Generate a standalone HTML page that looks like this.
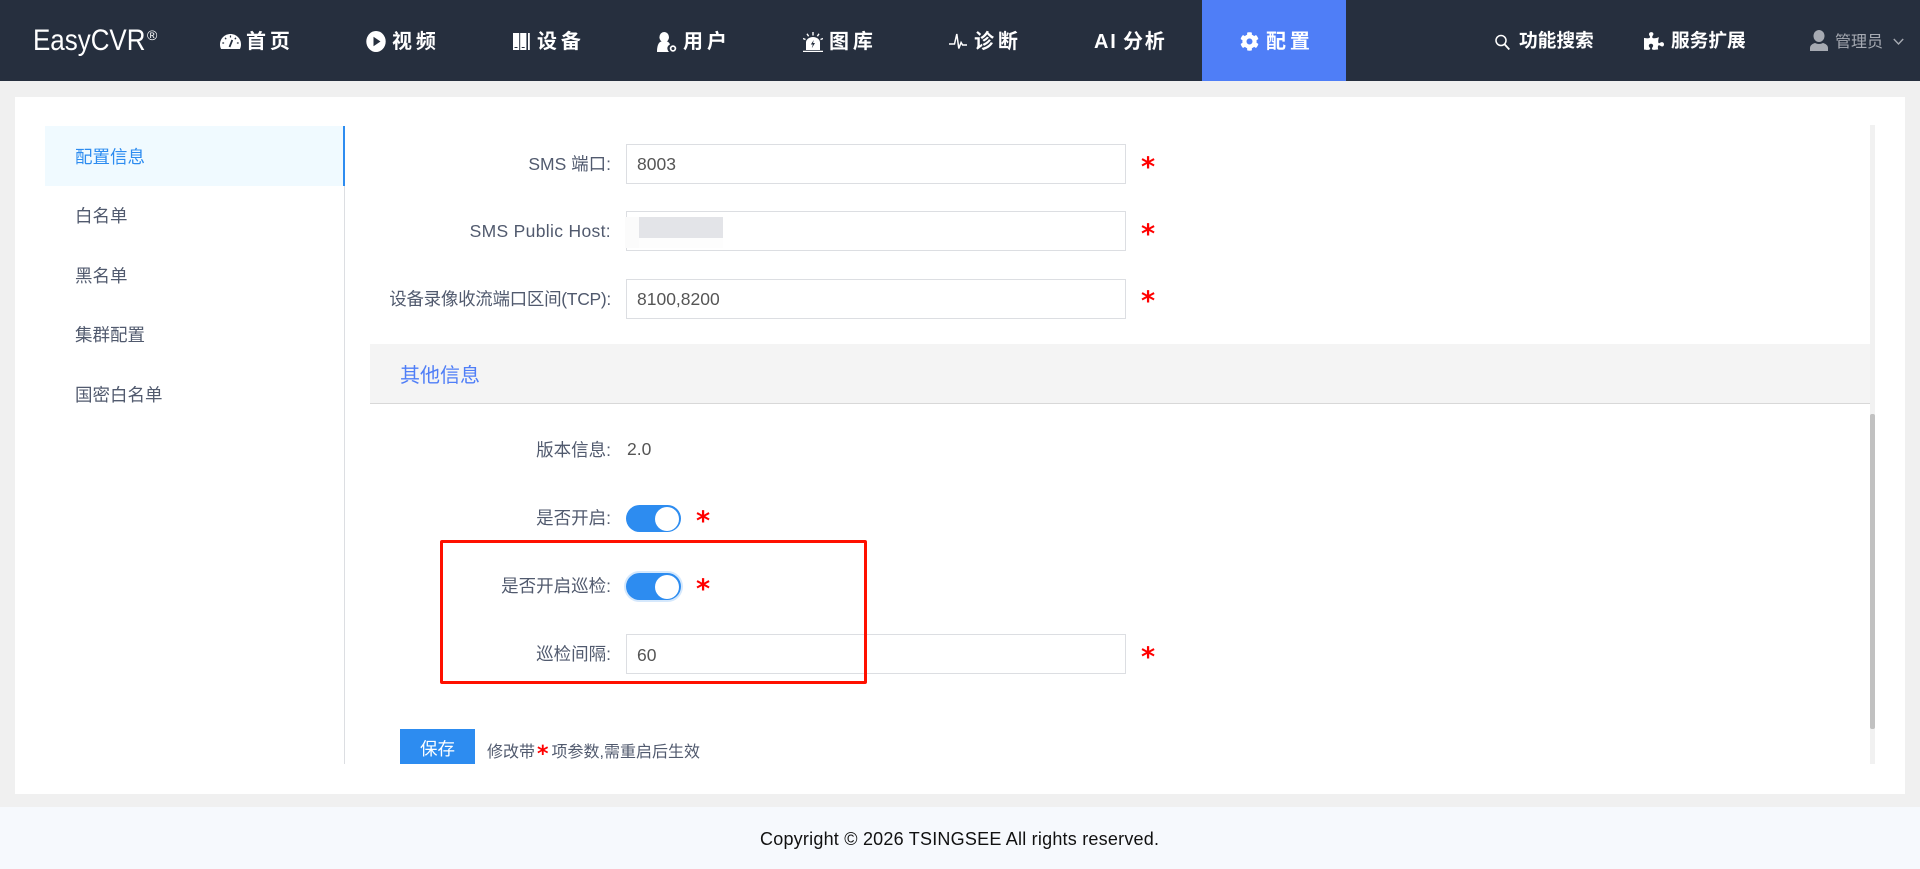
<!DOCTYPE html>
<html lang="zh-CN">
<head>
<meta charset="utf-8">
<title>EasyCVR</title>
<style>
html,body{margin:0;padding:0;width:1920px;height:869px;overflow:hidden;background:#f0f0f0;font-family:"Liberation Sans","Noto Sans CJK SC",sans-serif;color:#515a6e;font-size:17.5px}
.a{position:absolute}
.t{position:absolute;white-space:nowrap;line-height:30px;height:30px}
.nav{font-weight:700;font-size:20px;color:#fff;letter-spacing:3.9px;top:27px}
.nav2{font-weight:700;font-size:18.7px;color:#fff;top:26px}
.side{left:75px}
.lab{right:1309px;text-align:right}
.inp{position:absolute;left:626px;width:498px;height:38px;border:1px solid #dcdee2;background:#fff}
.val{left:637px;color:#555}
.star{position:absolute;left:1141px;color:#f00;font-family:"DejaVu Sans",sans-serif;font-weight:700;font-size:27px;line-height:30px;height:30px}
.tog{position:absolute;left:626px;width:55px;height:27px;border-radius:14px;background:#2d8cf0}
.tog i{position:absolute;right:2px;top:1.500px;width:24px;height:24px;border-radius:50%;background:#fff}
svg{position:absolute;display:block}
</style>
</head>
<body>
<div class="a" style="left:0;top:0;width:1920px;height:81px;background:#262f3e"></div>
<div class="a" style="left:1202px;top:0;width:144px;height:81px;background:#4f7ef7"></div>

<div class="t" style="left:33px;top:23px;font-size:30px;line-height:36px;height:36px;color:#fff;transform:scaleX(.865);transform-origin:left center">EasyCVR</div>
<div class="t" style="left:147px;top:25px;font-size:14px;line-height:20px;height:20px;color:#fff">®</div>

<svg style="left:220px;top:34px" width="21" height="15" viewBox="0 0 21 15"><path fill="#fff" d="M10.500 0C4.700 0 0 4.600 0 10.400c0 1.700.4 3.300 1.100 4.600h18.800c.7-1.300 1.100-2.900 1.100-4.600C21 4.600 16.300 0 10.500 0z"/><path stroke="#262f3e" stroke-width="1.200" fill="none" d="M10.500 1.500v2M5 3.800l1.200 1.400M2.300 9h1.800M16.900 9h1.800M16 3.800l-1.200 1.400"/><path stroke="#262f3e" stroke-width="1.800" fill="none" d="M9.500 13L12.300 6"/></svg>
<div class="t nav" style="left:246px">首页</div>

<svg style="left:366px;top:31px" width="20" height="21" viewBox="0 0 20 21"><ellipse cx="10" cy="10.500" rx="9.700" ry="10.500" fill="#fff"/><path fill="#262f3e" d="M7.500 5.800l7 4.700-7 4.700z"/></svg>
<div class="t nav" style="left:392px">视频</div>

<svg style="left:513px;top:33px" width="17" height="17" viewBox="0 0 17 17"><path fill="#fff" d="M0 0h6.200v17H0zM7.200 0h6.200v17H7.200zM15 0h1.800v17H15z"/><path fill="#262f3e" d="M1.500 14h3v1h-3zM8.700 14h3v1h-3z"/></svg>
<div class="t nav" style="left:537px">设备</div>

<svg style="left:657px;top:32px" width="20" height="20" viewBox="0 0 20 20"><ellipse cx="7.200" cy="5.200" rx="4.800" ry="5.200" fill="#fff"/><path fill="#fff" d="M0 20c0-5 1-10 4.500-10.500h5.500c1.500.4 2.500 1.500 3 3-2 1-3 2.700-2.500 4.700.2 1 .8 2 1.500 2.800z"/><circle cx="16" cy="16.500" r="2.400" fill="none" stroke="#fff" stroke-width="1.700"/></svg>
<div class="t nav" style="left:683px">用户</div>

<svg style="left:803px;top:32px" width="20" height="20" viewBox="0 0 20 20"><path stroke="#fff" stroke-width="1.400" d="M10 0v3.500M4 1.800l1.600 2.500M16 1.800l-1.600 2.500M0 6.500l2.500 1M20 6.500l-2.500 1"/><path fill="#fff" d="M3 18v-7.500C3 7.500 6 5 10 5s7 2.500 7 5.500V18zM0 18.800h20V20H0z"/><path fill="#262f3e" d="M10.800 8L7.800 12.500h2l-1 3.800 3.200-5.300h-2z"/></svg>
<div class="t nav" style="left:829px">图库</div>

<svg style="left:949px;top:33px" width="18" height="17" viewBox="0 0 18 17"><path fill="none" stroke="#fff" stroke-width="1.500" d="M0 11h5.500L7.800 1l2 14.500 2.300-6 1.500 2.500H18"/></svg>
<div class="t nav" style="left:974px">诊断</div>

<div class="t nav" style="left:1094px;letter-spacing:1.800px;word-spacing:-2px">AI 分析</div>

<svg style="left:1240px;top:32px" width="19" height="19" viewBox="0 0 512 512"><path fill="#fff" d="M487.400 315.700l-42.600-24.600c4.300-23.200 4.300-47 0-70.200l42.600-24.600c4.900-2.800 7.100-8.600 5.500-14-11.100-35.600-30-67.800-54.700-94.600-3.800-4.100-10-5.100-14.800-2.300L380.800 110c-17.900-15.400-38.500-27.300-60.800-35.100V25.800c0-5.600-3.900-10.500-9.400-11.700-36.700-8.200-74.300-7.800-109.200 0-5.500 1.200-9.400 6.100-9.400 11.700V75c-22.200 7.900-42.800 19.800-60.800 35.100L88.700 85.500c-4.900-2.800-11-1.900-14.800 2.300-24.700 26.700-43.600 58.900-54.700 94.600-1.700 5.400.6 11.200 5.500 14L67.300 221c-4.300 23.200-4.300 47 0 70.200l-42.600 24.600c-4.900 2.800-7.100 8.600-5.500 14 11.100 35.600 30 67.800 54.700 94.600 3.800 4.100 10 5.100 14.800 2.300l42.600-24.600c17.900 15.400 38.500 27.300 60.800 35.100v49.200c0 5.600 3.900 10.500 9.400 11.700 36.700 8.200 74.300 7.800 109.200 0 5.500-1.200 9.400-6.100 9.400-11.700v-49.200c22.200-7.900 42.800-19.800 60.800-35.100l42.600 24.600c4.900 2.800 11 1.900 14.800-2.300 24.700-26.700 43.600-58.900 54.700-94.600 1.500-5.500-.7-11.300-5.600-14.100zM256 336c-44.100 0-80-35.900-80-80s35.900-80 80-80 80 35.900 80 80-35.900 80-80 80z"/></svg>
<div class="t nav" style="left:1266px">配置</div>

<svg style="left:1495px;top:34px" width="15" height="16" viewBox="0 0 15 16"><circle cx="6" cy="6.500" r="5" fill="none" stroke="#fff" stroke-width="1.500"/><path stroke="#fff" stroke-width="1.800" d="M9.800 10.500l4.500 5"/></svg>
<div class="t nav2" style="left:1519px">功能搜索</div>

<svg style="left:1644px;top:31px" width="20" height="20" viewBox="0 0 576 512"><path fill="#fff" d="M519.442 288.651c-41.519 0-59.5 31.593-82.058 31.593C377.409 320.244 432 144 432 144s-196.288 80-196.288-3.297c0-35.827 36.288-46.250 36.288-85.985C272 19.216 243.885 0 210.539 0c-34.654 0-66.366 18.891-66.366 56.346 0 41.364 31.711 59.277 31.711 81.750C175.885 207.719 0 166.758 0 166.758v333.237s178.635 41.047 178.635-28.662c0-22.473-40-40.107-40-81.471 0-37.456 29.250-56.346 63.577-56.346 33.673 0 61.788 19.216 61.788 54.717 0 39.735-36.288 50.158-36.288 85.985 0 60.803 129.675 25.730 181.230 25.730 0 0-34.725-120.101 25.827-120.101 35.962 0 46.423 36.152 86.308 36.152C556.712 416 576 387.990 576 354.443c0-34.199-18.962-65.792-56.558-65.792z"/></svg>
<div class="t nav2" style="left:1671px">服务扩展</div>

<svg style="left:1810px;top:30px" width="18" height="21" viewBox="0 0 18 21"><ellipse cx="9" cy="6" rx="5.500" ry="6" fill="#a6aab2"/><path fill="#a6aab2" d="M0 21v-3c0-3 3-4.500 5-5 2.500 1.300 5.500 1.300 8 0 2 .5 5 2 5 5v3z"/></svg>
<div class="t" style="left:1835px;top:28px;font-size:16px;color:#a6aab2">管理员</div>
<svg style="left:1893px;top:38px" width="11" height="8" viewBox="0 0 11 8"><path fill="none" stroke="#a6aab2" stroke-width="1.400" d="M.8 1l4.700 5 4.700-5"/></svg>

<div class="a" style="left:15px;top:97px;width:1890px;height:697px;background:#fff"></div>

<div class="a" style="left:344px;top:126px;width:1px;height:638px;background:#dcdee2"></div>
<div class="a" style="left:45px;top:126px;width:300px;height:60px;background:#f0faff"></div>
<div class="a" style="left:343px;top:126px;width:2px;height:60px;background:#2d8cf0"></div>
<div class="t side" style="top:142px;color:#2d8cf0">配置信息</div>
<div class="t side" style="top:201px">白名单</div>
<div class="t side" style="top:261px">黑名单</div>
<div class="t side" style="top:320px">集群配置</div>
<div class="t side" style="top:380px">国密白名单</div>

<div class="a" style="left:1870px;top:125px;width:5px;height:639px;background:#f1f1f1"></div>
<div class="a" style="left:1870px;top:414px;width:5px;height:315px;background:#c1c1c1;border-radius:2px"></div>

<div class="t lab" style="top:149px">SMS 端口:</div>
<div class="inp" style="top:144px"></div>
<div class="t val" style="top:149px">8003</div>
<div class="star" style="top:153px">*</div>

<div class="t lab" style="top:216px;letter-spacing:.33px">SMS Public Host:</div>
<div class="inp" style="top:211px"></div>
<div class="a" style="left:625px;top:217px;width:14px;height:31px;background:#fbfbfb"></div>
<div class="a" style="left:639px;top:217px;width:84px;height:21px;background:#e3e4e8"></div>
<div class="a" style="left:639px;top:238px;width:84px;height:10px;background:#fdfdfd"></div>
<div class="star" style="top:220px">*</div>

<div class="t lab" style="top:284px;letter-spacing:-.3px">设备录像收流端口区间(TCP):</div>
<div class="inp" style="top:279px"></div>
<div class="t val" style="top:284px">8100,8200</div>
<div class="star" style="top:287px">*</div>

<div class="a" style="left:370px;top:344px;width:1500px;height:59px;background:#f4f4f4;border-bottom:1px solid #d8d8d8"></div>
<div class="t" style="left:400px;top:361px;font-size:20px;color:#4f7ef7">其他信息</div>

<div class="t lab" style="top:435px">版本信息:</div>
<div class="t" style="left:627px;top:434px;color:#555">2.0</div>

<div class="t lab" style="top:503px">是否开启:</div>
<div class="tog" style="top:505px"><i></i></div>
<div class="star" style="left:696px;top:507px">*</div>

<div class="t lab" style="top:571px">是否开启巡检:</div>
<div class="tog" style="top:573px;box-shadow:0 0 0 2px rgba(45,140,240,.2)"><i></i></div>
<div class="star" style="left:696px;top:575px">*</div>

<div class="t lab" style="top:639px">巡检间隔:</div>
<div class="inp" style="top:634px"></div>
<div class="t val" style="top:640px">60</div>
<div class="star" style="top:643px">*</div>

<div class="a" style="left:440px;top:540px;width:421px;height:138px;border:3px solid #ff1000;border-radius:2px"></div>

<div class="a" style="left:400px;top:729px;width:75px;height:35px;background:#2d8cf0"></div>
<div class="t" style="left:400px;top:734px;width:75px;text-align:center;color:#fff">保存</div>
<div class="t" style="left:487px;top:738px;font-size:16px">修改带<span style="color:#f00;font-family:'DejaVu Sans',sans-serif;font-weight:700;font-size:22px;line-height:20px;position:relative;top:4px;padding:0 3px 0 2px">*</span>项参数,需重启后生效</div>

<div class="a" style="left:0;top:807px;width:1920px;height:62px;background:#f6f9fd"></div>
<div class="t" style="left:760px;top:824px;font-size:18px;color:#111;letter-spacing:.22px">Copyright © 2026 TSINGSEE All rights reserved.</div>
</body>
</html>
